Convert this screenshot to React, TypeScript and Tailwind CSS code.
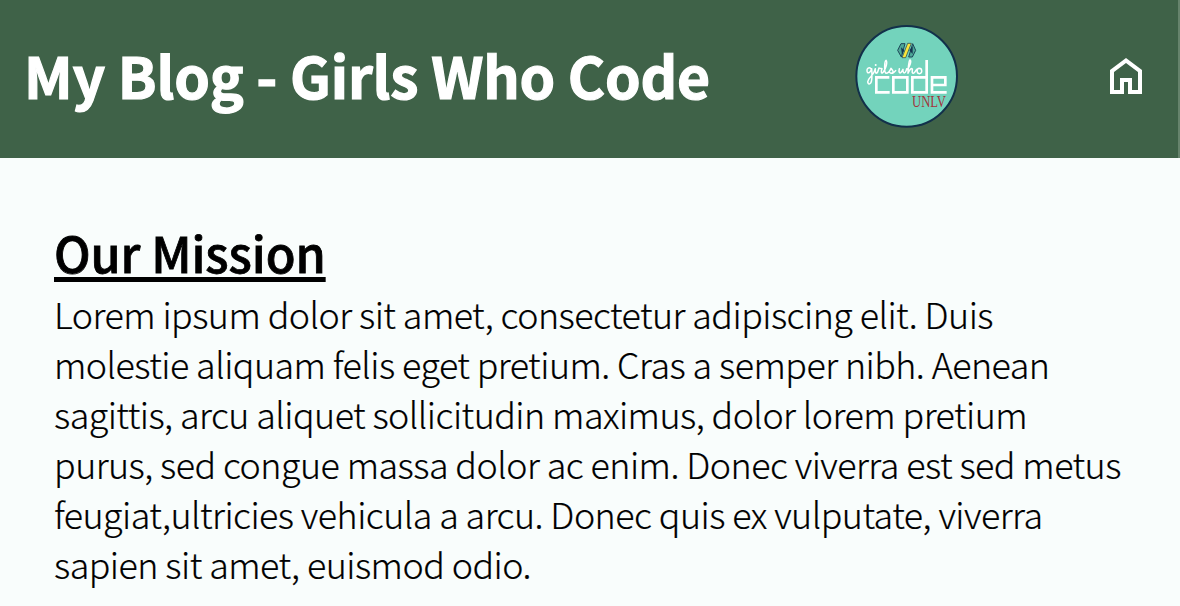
import React from "react";

const lines = [
  { text: "Lorem ipsum dolor sit amet, consectetur adipiscing elit. Duis" },
  { text: "molestie aliquam felis eget pretium. Cras a semper nibh. Aenean" },
  { text: "sagittis, arcu aliquet sollicitudin maximus, dolor lorem pretium" },
  { text: "purus, sed congue massa dolor ac enim. Donec viverra est sed metus" },
  { text: "feugiat,ultricies vehicula a arcu. Donec quis ex vulputate, viverra" },
  { text: "sapien sit amet, euismod odio." },
];

function Logo() {
  return (
    <svg className="h-[114px] w-[114px] shrink-0" viewBox="0 0 342 342" fill="none" role="img" aria-label="Girls Who Code UNLV">
      <circle cx="170" cy="169" r="151" fill="#73d3bc" stroke="#12304a" strokeWidth="6" />
      <path d="M153 71 H165 L154 111 L143 91 Z M176 111 L188 71 L197 91 L187 111 Z" fill="#4da897" stroke="#1d4558" strokeWidth="3" />
      <path d="M153 82 L163 91 L156 104 Z M188 79 L178 91 L188 102 Z" fill="#143650" />
      <path d="M173 70 H184 L167 113 H156 Z" fill="#f9e53c" stroke="#143650" strokeWidth="2" />
      <g stroke="#fff" strokeWidth="4.5" strokeLinecap="round" strokeLinejoin="round">
        <path d="M63 146 C57 140 50 146 51 153 C52 162 61 160 65 146 C66 162 68 181 62 189 C56 196 50 188 56 178 C62 168 72 164 76 146 C75 158 78 164 83 156 L87 144 C91 147 94 145 96 146 C91 158 95 163 100 156 C108 146 113 126 108 121 C103 123 102 158 108 160 C114 160 120 152 123 145 C128 151 134 159 125 160 C121 160 119 157 119 157" />
        <path d="M126 160 C131 159 134 156 137 152 M148 146 C145 161 151 164 159 148 C158 162 166 164 170 146 M170 150 C178 144 186 122 180 120 C175 123 175 147 174 160 C178 150 183 143 187 147 C188 151 184 160 190 160 C194 158 197 153 200 148 M208 145 C217 145 218 161 208 161 C199 160 199 146 208 145" />
      </g>
      <circle cx="77" cy="135" r="3" fill="#fff" />
      <g stroke="#fff" strokeWidth="8">
        <path d="M118 172 H79 V217 H119 M130 172 H172 V217 H130 Z M230 120 V217 H187 V172 H230 M290 217 H246 V172 H286 V195 H247" />
      </g>
      <text x="186" y="261" textLength="102" lengthAdjust="spacingAndGlyphs" fill="#a3343c" fontFamily="Liberation Serif, serif" fontSize="48">UNLV</text>
    </svg>
  );
}

function HomeIcon() {
  return (
    <svg className="h-9 w-8 shrink-0" viewBox="0 0 32 36" fill="#fff" role="img" aria-label="Home">
      <path fillRule="evenodd" d="M0 12 16 0 32 12V36H18V24H14V36H0Z M4 32H10V20H22V32H28V14L16 5 4 14Z" />
    </svg>
  );
}

export default function App() {
  return (
    <div className="min-h-[606px] overflow-hidden bg-[#f9fdfc] text-black font-['Noto_Sans_CJK_SC',sans-serif]">
      <header className="flex h-[158px] items-start border-r-2 border-[#66836c] bg-[#3f6248] pl-6 pr-9">
        <h1 className="mt-[35px] w-[826px] text-[57px] font-bold leading-[79px] tracking-[-0.17px] text-white whitespace-nowrap [-webkit-text-stroke:1.2px_white]">My Blog - Girls Who Code</h1>
        <div className="mt-5"><Logo /></div>
        <div className="ml-auto mt-[58px]"><HomeIcon /></div>
      </header>
      <main className="px-[54px] pt-[63px]">
        <h2 className="flex text-[48.6px] font-medium leading-[62px] tracking-[-0.1px]">
          <span className="h-[60px] whitespace-nowrap underline decoration-[5px] underline-offset-[4px] [text-decoration-skip-ink:none] [-webkit-text-stroke:0.8px_black]">Our Mission</span>
        </h2>
        <p className="mt-[7px] text-[35.8px] font-light leading-[50px] tracking-[-0.52px] [-webkit-text-stroke:0.2px_black]">
          {lines.map(({ text }) => (
            <span key={text} className="block whitespace-nowrap">{text}</span>
          ))}
        </p>
      </main>
    </div>
  );
}
